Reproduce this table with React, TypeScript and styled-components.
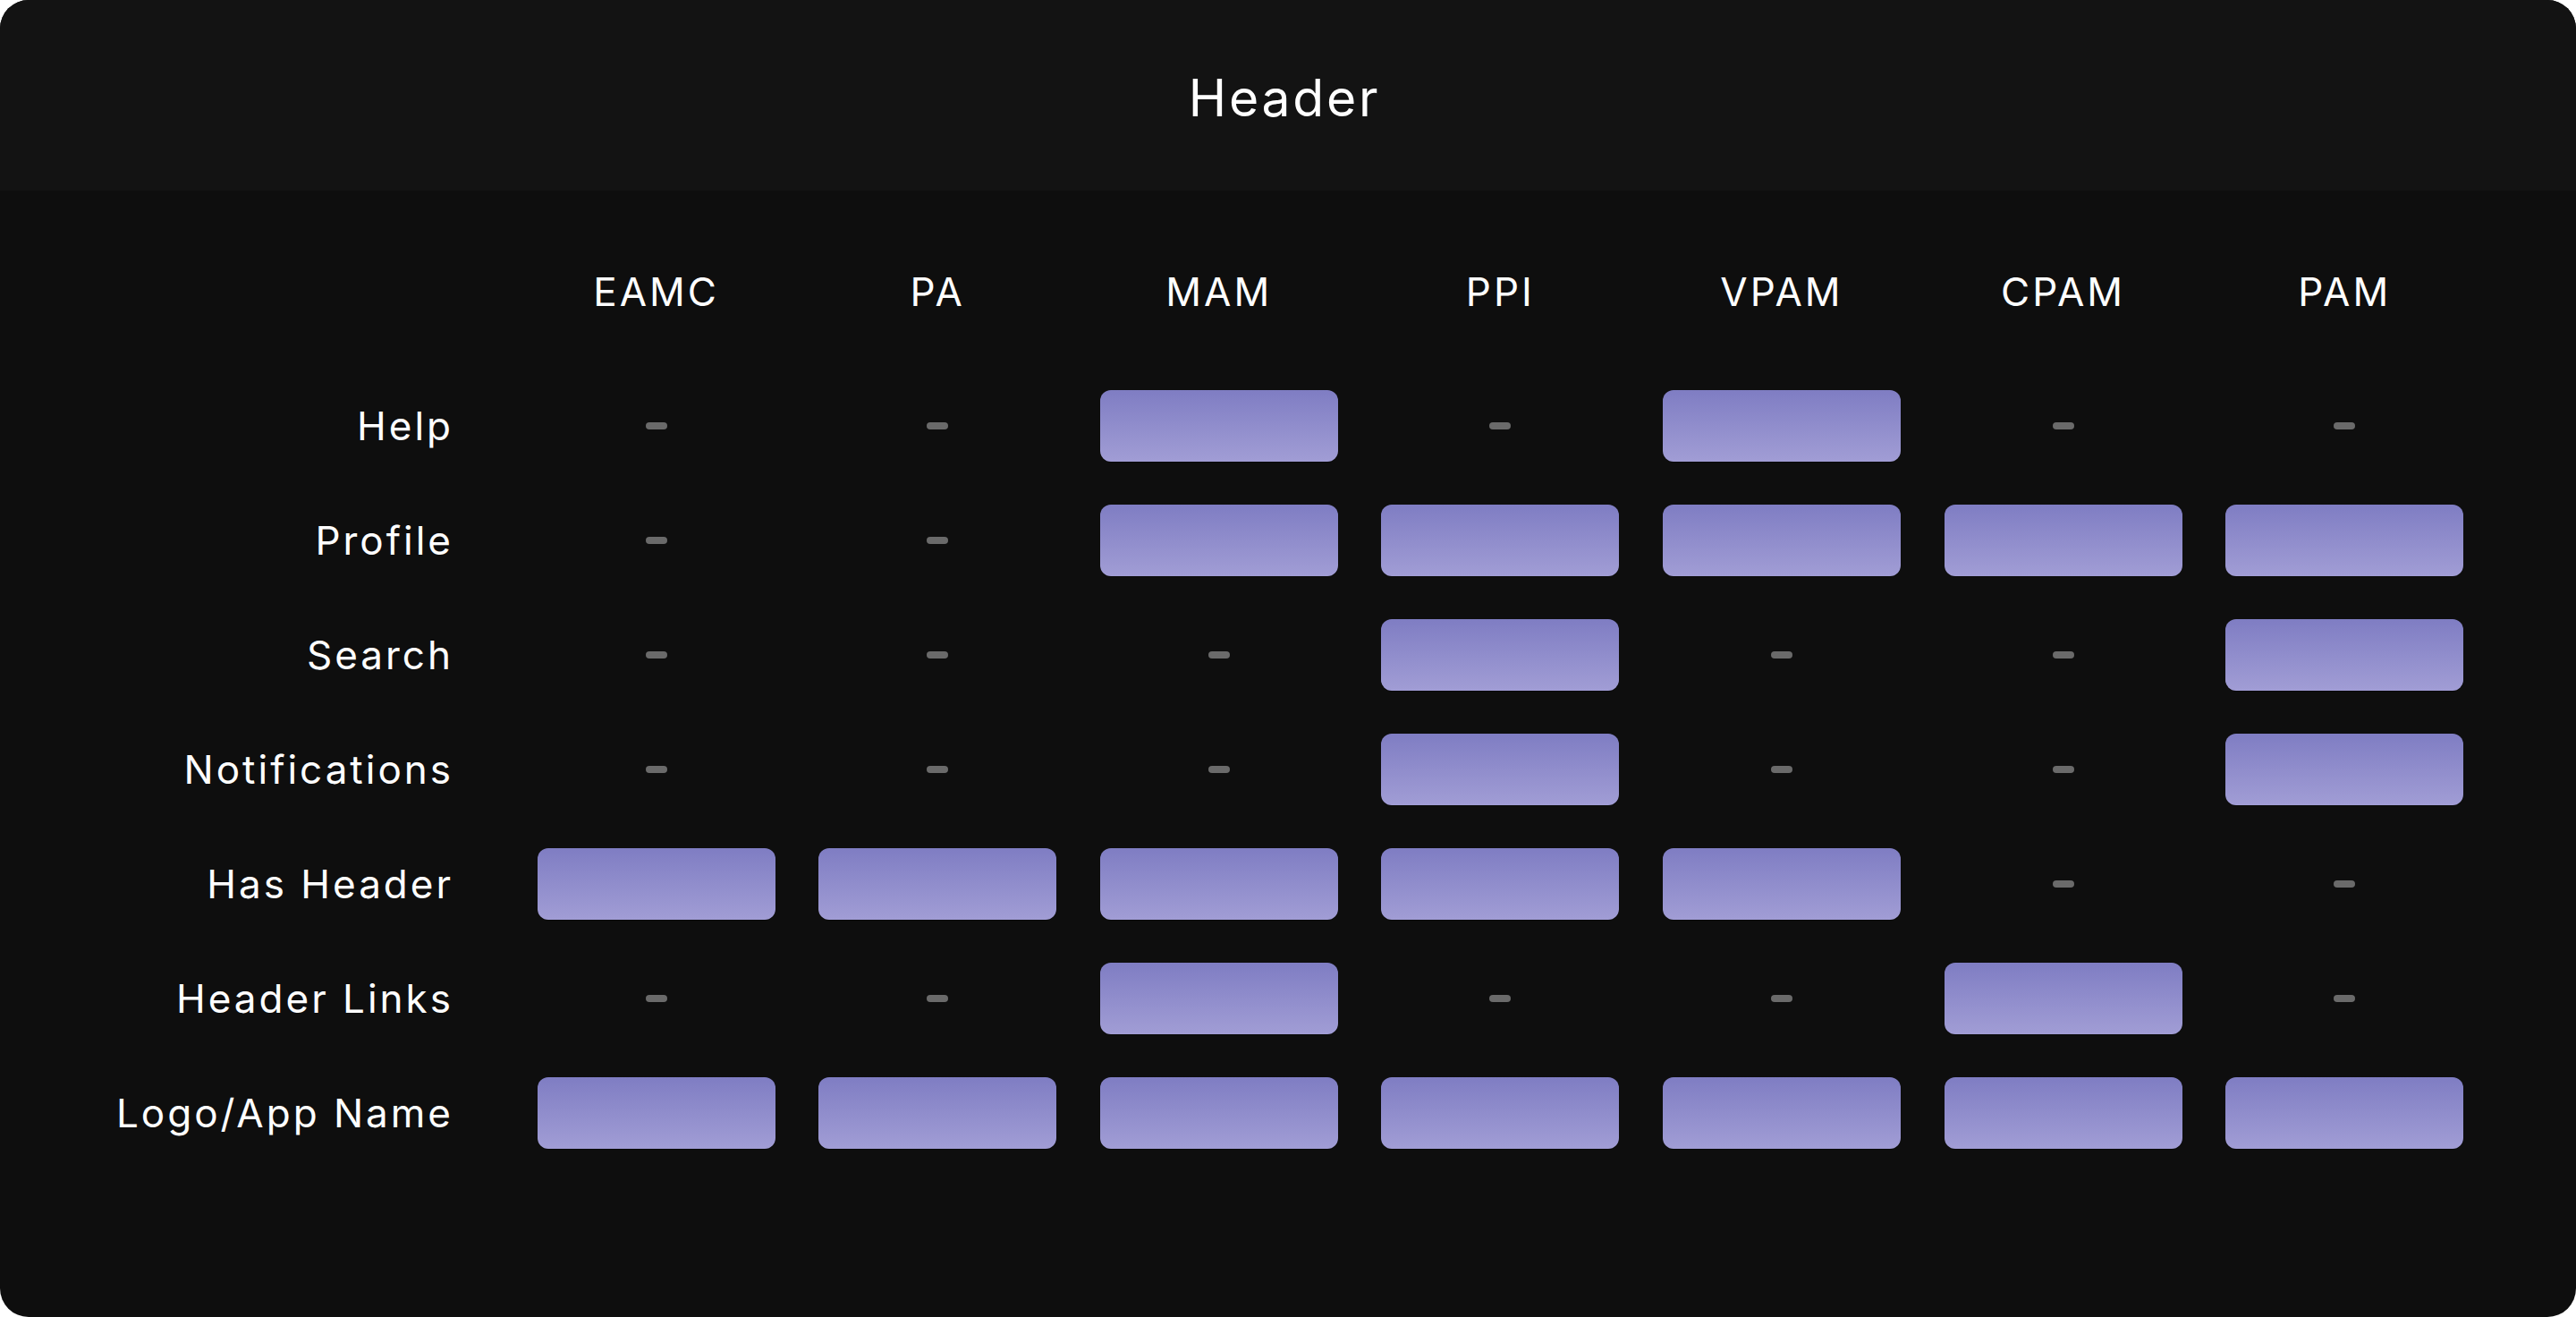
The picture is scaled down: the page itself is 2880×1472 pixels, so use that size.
import React from 'react'
import styled, { createGlobalStyle } from 'styled-components'

const GlobalStyle = createGlobalStyle`
  html, body {
    margin: 0;
    padding: 0;
    background: #ffffff;
  }
  * {
    box-sizing: border-box;
  }
`

const columns = ['EAMC', 'PA', 'MAM', 'PPI', 'VPAM', 'CPAM', 'PAM']

const rows: { label: string; values: boolean[] }[] = [
  { label: 'Help', values: [false, false, true, false, true, false, false] },
  { label: 'Profile', values: [false, false, true, true, true, true, true] },
  { label: 'Search', values: [false, false, false, true, false, false, true] },
  {
    label: 'Notifications',
    values: [false, false, false, true, false, false, true],
  },
  { label: 'Has Header', values: [true, true, true, true, true, false, false] },
  {
    label: 'Header Links',
    values: [false, false, true, false, false, true, false],
  },
  { label: 'Logo/App Name', values: [true, true, true, true, true, true, true] },
]

const Card = styled.div`
  width: 100vw;
  height: 100vh;
  border-radius: 32px;
  overflow: hidden;
  background: #0e0e0e;
  display: flex;
  flex-direction: column;
  font-family: Inter, 'Liberation Sans', sans-serif;
  color: #ffffff;
`

const TitleBar = styled.div`
  height: 213px;
  flex-shrink: 0;
  background: #131313;
  display: flex;
  align-items: center;
  justify-content: center;
`

const Title = styled.h1`
  margin: 6px 0 0;
  padding-right: 8px;
  font-size: 57px;
  font-weight: 400;
  letter-spacing: 2.8px;
`

const Matrix = styled.div`
  display: grid;
  grid-template-columns: 552px repeat(7, 266px);
  grid-template-rows: 90px repeat(7, 80px);
  column-gap: 48.6px;
  row-gap: 48px;
  padding-top: 85px;
`

const ColumnHeading = styled.div`
  font-size: 44px;
  line-height: 56px;
  letter-spacing: 3px;
  text-align: center;
  align-self: start;
`

const RowLabel = styled.div`
  font-size: 44px;
  line-height: 56px;
  letter-spacing: 3px;
  text-align: right;
  padding-right: 45px;
  align-self: center;
`

const Cell = styled.div`
  display: flex;
  align-items: center;
  justify-content: center;
`

const Filled = styled.div`
  width: 100%;
  height: 100%;
  border-radius: 12px;
  background: linear-gradient(180deg, #7f7dc3 0%, #a19dd5 100%);
  box-shadow: 0 1px 0 rgba(0, 0, 0, 0.35);
`

const Dash = styled.div`
  width: 24px;
  height: 8px;
  border-radius: 4px;
  background: #6a6a6a;
`

export default function App() {
  return (
    <>
      <GlobalStyle />
      <Card>
        <TitleBar>
          <Title>Header</Title>
        </TitleBar>
        <Matrix>
          <div />
          {columns.map((c) => (
            <ColumnHeading key={c}>{c}</ColumnHeading>
          ))}
          {rows.map((row) => (
            <React.Fragment key={row.label}>
              <RowLabel>{row.label}</RowLabel>
              {row.values.map((on, i) => (
                <Cell key={columns[i]}>{on ? <Filled /> : <Dash />}</Cell>
              ))}
            </React.Fragment>
          ))}
        </Matrix>
      </Card>
    </>
  )
}
